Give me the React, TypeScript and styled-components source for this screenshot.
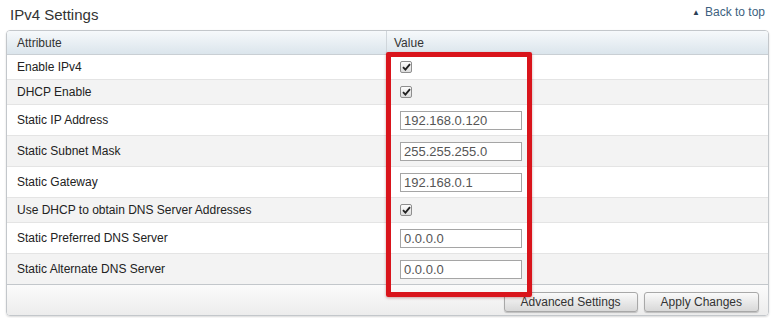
import React from 'react';
import styled, { createGlobalStyle } from 'styled-components';

type Row =
  | { label: string; kind: 'check' }
  | { label: string; kind: 'text'; value: string };

const rows: Row[] = [
  { label: 'Enable IPv4', kind: 'check' },
  { label: 'DHCP Enable', kind: 'check' },
  { label: 'Static IP Address', kind: 'text', value: '192.168.0.120' },
  { label: 'Static Subnet Mask', kind: 'text', value: '255.255.255.0' },
  { label: 'Static Gateway', kind: 'text', value: '192.168.0.1' },
  { label: 'Use DHCP to obtain DNS Server Addresses', kind: 'check' },
  { label: 'Static Preferred DNS Server', kind: 'text', value: '0.0.0.0' },
  { label: 'Static Alternate DNS Server', kind: 'text', value: '0.0.0.0' },
];

const CheckBox: React.FC = () => (
  <Box>
    <svg width="9" height="8" viewBox="0 0 9 8">
      <path d="M1 4.2 L3.4 6.6 L8 1.2" fill="none" stroke="#222" strokeWidth="1.9" />
    </svg>
  </Box>
);

const App: React.FC = () => {
  return (
    <Page>
      <GlobalStyle />
      <TopBar>
        <Title>IPv4 Settings</Title>
        <BackLink href="#top">
          <Arrow>▲</Arrow>Back to top
        </BackLink>
      </TopBar>
      <Panel>
        <HeadRow>
          <HeadCell $first>Attribute</HeadCell>
          <HeadCell>Value</HeadCell>
        </HeadRow>
        {rows.map((row, i) => (
          <BodyRow key={row.label} $odd={i % 2 === 1} $tall={row.kind === 'text'} $last={i === rows.length - 1}>
            <LabelCell>{row.label}</LabelCell>
            <ValueCell>
              {row.kind === 'check' ? <CheckBox /> : <Field defaultValue={row.value} />}
            </ValueCell>
          </BodyRow>
        ))}
        <Footer>
          <Button>Advanced Settings</Button>
          <Button>Apply Changes</Button>
        </Footer>
      </Panel>
      <Highlight />
    </Page>
  );
};

const GlobalStyle = createGlobalStyle`
  body {
    margin: 0;
    background: #fff;
    font-family: "Liberation Sans", Arial, sans-serif;
  }
`;

const Page = styled.div`
  position: relative;
  width: 776px;
  height: 318px;
  overflow: hidden;
`;

const TopBar = styled.div`
  display: flex;
  justify-content: space-between;
  align-items: center;
  height: 30px;
  padding: 0 11px 2px 10px;
  box-sizing: border-box;
`;

const Title = styled.div`
  font-size: 15px;
  color: #333;
`;

const BackLink = styled.a`
  font-size: 12px;
  color: #3d5f80;
  text-decoration: none;
  display: flex;
  align-items: center;
  margin-top: -4px;
`;

const Arrow = styled.span`
  font-size: 8px;
  margin-right: 5px;
  color: #2a3f55;
`;

const Panel = styled.div`
  margin-left: 6px;
  width: 763px;
  border: 1px solid #c3c7cb;
  border-radius: 4px;
  box-sizing: border-box;
  overflow: hidden;
  box-shadow: 0 1px 2px rgba(0, 0, 0, 0.15);
`;

const HeadRow = styled.div`
  display: grid;
  grid-template-columns: 380px 1fr;
  height: 23px;
  background: linear-gradient(#f6f9fb, #dbe5ec);
  border-bottom: 1px solid #c9cfd4;
`;

const HeadCell = styled.div<{ $first?: boolean }>`
  display: flex;
  align-items: center;
  padding-left: ${(p) => (p.$first ? '10px' : '7px')};
  font-size: 12px;
  color: #333;
  border-right: ${(p) => (p.$first ? '1px solid #d0d6db' : 'none')};
`;

const BodyRow = styled.div<{ $odd: boolean; $tall: boolean; $last: boolean }>`
  display: grid;
  grid-template-columns: 380px 1fr;
  height: ${(p) => (p.$tall ? '30px' : '24px')};
  background: ${(p) => (p.$odd ? '#f3f3f3' : '#fff')};
  border-bottom: 1px solid ${(p) => (p.$last ? '#c3c7cb' : '#e4e4e4')};
`;

const LabelCell = styled.div`
  display: flex;
  align-items: center;
  padding-left: 10px;
  font-size: 12px;
  color: #222;
  border-right: 1px solid #e6e6e6;
`;

const ValueCell = styled.div`
  display: flex;
  align-items: center;
  padding-left: 13px;
`;

const Box = styled.span`
  display: inline-flex;
  align-items: center;
  justify-content: center;
  width: 10px;
  height: 10px;
  border: 1px solid #8e8e8e;
  border-radius: 2px;
  background: linear-gradient(#fdfdfd, #dcdcdc);
`;

const Field = styled.input`
  width: 122px;
  height: 19px;
  box-sizing: border-box;
  border: 1px solid #a5a5a5;
  padding: 0 3px;
  font-family: "Liberation Sans", Arial, sans-serif;
  font-size: 13px;
  color: #555;
  outline: none;
`;

const Footer = styled.div`
  display: flex;
  justify-content: flex-end;
  align-items: center;
  gap: 6px;
  height: 30px;
  padding: 4px 9px 0 0;
  box-sizing: border-box;
  background: linear-gradient(#fbfbfb, #ececec);
`;

const Button = styled.button`
  height: 20px;
  padding: 0 16px;
  border: 1px solid #a8a8a8;
  border-radius: 3px;
  background: linear-gradient(#fafafa, #d8d8d8);
  font-family: "Liberation Sans", Arial, sans-serif;
  font-size: 12px;
  color: #333;
  box-shadow: 0 1px 1px rgba(0, 0, 0, 0.2);
`;

const Highlight = styled.div`
  position: absolute;
  left: 386px;
  top: 52px;
  width: 146px;
  height: 245px;
  box-sizing: border-box;
  border: 5px solid #d9141b;
  border-radius: 2px;
  box-shadow: 0 1px 3px rgba(120, 0, 0, 0.35);
  pointer-events: none;
`;

export default App;
